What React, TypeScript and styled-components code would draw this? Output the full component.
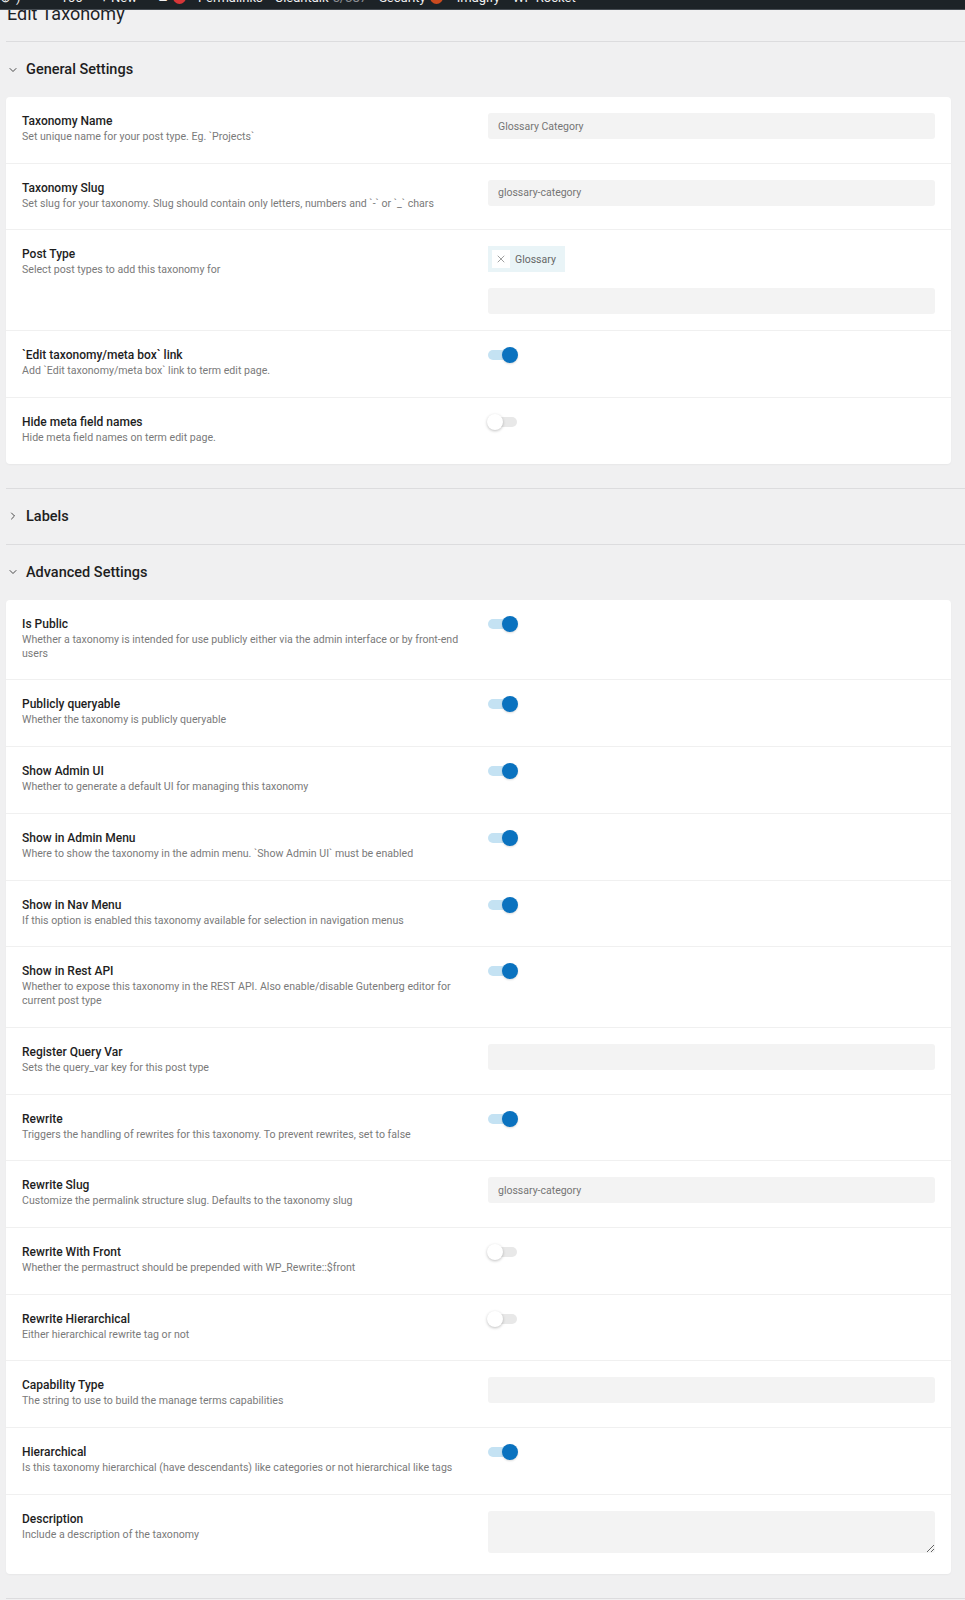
import React from 'react';
import styled, { createGlobalStyle } from 'styled-components';
import { ChevronDown, ChevronRight, X } from 'lucide-react';

const GlobalStyle = createGlobalStyle`
  body {
    margin: 0;
    background: #f0f0f1;
    font-family: Roboto, "Liberation Sans", sans-serif;
    color: #1e1e1e;
  }
  * { box-sizing: border-box; }
`;

/* top admin bar, fixed over the page like in wp-admin */
const AdminBar = styled.div`
  position: fixed;
  top: 0;
  left: 0;
  right: 0;
  height: 10px;
  background: #1d2327;
  border-bottom: 1px solid #474d53;
  overflow: hidden;
  z-index: 10;
`;

const BarItems = styled.div`
  display: flex;
  align-items: center;
  height: 13px;
  margin-top: -9px;
  font-size: 13px;
  line-height: 13px;
  color: #f0f0f1;
  white-space: nowrap;
`;

const BarItem = styled.span<{ $left: number }>`
  margin-left: ${p => p.$left}px;
  display: inline-flex;
  align-items: center;
  gap: 4px;
`;

const BarMuted = styled.span`
  color: #8c8f94;
`;

const BarBadge = styled.span<{ $color: string }>`
  display: inline-block;
  width: 13px;
  height: 13px;
  border-radius: 50%;
  background: ${p => p.$color};
`;

const Page = styled.div`
  padding: 0 0 0 6px;
`;

const Title = styled.h1`
  margin: 0 0 13px 1px;
  font-size: 18px;
  line-height: 28px;
  font-weight: 400;
  color: #1d2327;
`;

const Section = styled.section`
  border-top: 1px solid #dcdcde;
`;

const SectionHeader = styled.div`
  height: 55px;
  display: flex;
  align-items: center;
  gap: 7px;
  padding-left: 1px;
  font-size: 14.5px;
  font-weight: 500;
  color: #1e1e1e;
`;

const Card = styled.div`
  background: #fff;
  border-radius: 4px;
  margin: 0 14px 24px 0;
  box-shadow: 0 1px 2px rgba(0, 0, 0, 0.04);
`;

const Row = styled.div`
  display: grid;
  grid-template-columns: 1fr 1fr;
  column-gap: 19px;
  padding: 16px;
  & + & {
    border-top: 1px solid #f0f0f0;
  }
`;

const Info = styled.div`
  padding-bottom: 2.7px;
`;

const Label = styled.div`
  font-size: 12px;
  line-height: 17px;
  font-weight: 500;
  color: #1e1e1e;
`;

const Help = styled.div`
  font-size: 10.6px;
  line-height: 14px;
  color: #7a7a7a;
`;

const Control = styled.div`
  display: flex;
  flex-direction: column;
  align-items: flex-start;
  gap: 16px;
`;

const TextInput = styled.input`
  width: 100%;
  height: 26px;
  border: none;
  border-radius: 3px;
  background: #f3f3f3;
  padding: 0 10px;
  font-family: inherit;
  font-size: 10.5px;
  color: #757575;
  outline: none;
`;

const TextArea = styled.textarea`
  display: block;
  width: 100%;
  height: 42px;
  margin-bottom: 5px;
  border: none;
  border-radius: 3px;
  background: #f3f3f3;
  padding: 6px 10px;
  font-family: inherit;
  font-size: 10.5px;
  color: #757575;
  resize: vertical;
  outline: none;
`;

const Tag = styled.span`
  display: inline-flex;
  align-items: center;
  gap: 5px;
  height: 26px;
  padding: 0 9px 0 4px;
  background: #e9f4f7;
  font-size: 10.5px;
  color: #666;
`;

const TagRemove = styled.span`
  width: 18px;
  height: 18px;
  display: flex;
  align-items: center;
  justify-content: center;
  background: #fff;
  color: #777;
`;

const Track = styled.span<{ $on: boolean }>`
  position: relative;
  display: block;
  width: 29px;
  height: 10px;
  margin-top: 3px;
  border-radius: 5px;
  background: ${p => (p.$on ? '#c4e2f3' : '#e8e8e8')};
`;

const Knob = styled.span<{ $on: boolean }>`
  position: absolute;
  top: -3px;
  left: ${p => (p.$on ? '14px' : '-1px')};
  width: 16px;
  height: 16px;
  border-radius: 50%;
  background: ${p => (p.$on ? '#0a72bf' : '#fff')};
  box-shadow: ${p => (p.$on ? '0 1px 2px rgba(0,0,0,0.15)' : '0 1px 3px rgba(0,0,0,0.25)')};
`;

type Field =
  | { kind: 'input'; value?: string }
  | { kind: 'toggle'; on: boolean }
  | { kind: 'tags'; tags: string[] }
  | { kind: 'textarea' };

type Setting = { label: string; help: string; field: Field };

const general: Setting[] = [
  { label: 'Taxonomy Name', help: 'Set unique name for your post type. Eg. `Projects`', field: { kind: 'input', value: 'Glossary Category' } },
  { label: 'Taxonomy Slug', help: "Set slug for your taxonomy. Slug should contain only letters, numbers and `-` or `_` chars", field: { kind: 'input', value: 'glossary-category' } },
  { label: 'Post Type', help: 'Select post types to add this taxonomy for', field: { kind: 'tags', tags: ['Glossary'] } },
  { label: '`Edit taxonomy/meta box` link', help: 'Add `Edit taxonomy/meta box` link to term edit page.', field: { kind: 'toggle', on: true } },
  { label: 'Hide meta field names', help: 'Hide meta field names on term edit page.', field: { kind: 'toggle', on: false } },
];

const advanced: Setting[] = [
  { label: 'Is Public', help: 'Whether a taxonomy is intended for use publicly either via the admin interface or by front-end users', field: { kind: 'toggle', on: true } },
  { label: 'Publicly queryable', help: 'Whether the taxonomy is publicly queryable', field: { kind: 'toggle', on: true } },
  { label: 'Show Admin UI', help: 'Whether to generate a default UI for managing this taxonomy', field: { kind: 'toggle', on: true } },
  { label: 'Show in Admin Menu', help: 'Where to show the taxonomy in the admin menu. `Show Admin UI` must be enabled', field: { kind: 'toggle', on: true } },
  { label: 'Show in Nav Menu', help: 'If this option is enabled this taxonomy available for selection in navigation menus', field: { kind: 'toggle', on: true } },
  { label: 'Show in Rest API', help: 'Whether to expose this taxonomy in the REST API. Also enable/disable Gutenberg editor for current post type', field: { kind: 'toggle', on: true } },
  { label: 'Register Query Var', help: 'Sets the query_var key for this post type', field: { kind: 'input' } },
  { label: 'Rewrite', help: 'Triggers the handling of rewrites for this taxonomy. To prevent rewrites, set to false', field: { kind: 'toggle', on: true } },
  { label: 'Rewrite Slug', help: 'Customize the permalink structure slug. Defaults to the taxonomy slug', field: { kind: 'input', value: 'glossary-category' } },
  { label: 'Rewrite With Front', help: 'Whether the permastruct should be prepended with WP_Rewrite::$front', field: { kind: 'toggle', on: false } },
  { label: 'Rewrite Hierarchical', help: 'Either hierarchical rewrite tag or not', field: { kind: 'toggle', on: false } },
  { label: 'Capability Type', help: 'The string to use to build the manage terms capabilities', field: { kind: 'input' } },
  { label: 'Hierarchical', help: 'Is this taxonomy hierarchical (have descendants) like categories or not hierarchical like tags', field: { kind: 'toggle', on: true } },
  { label: 'Description', help: 'Include a description of the taxonomy', field: { kind: 'textarea' } },
];

const Toggle: React.FC<{ on: boolean }> = ({ on }) => (
  <Track $on={on}>
    <Knob $on={on} />
  </Track>
);

const FieldControl: React.FC<{ field: Field }> = ({ field }) => {
  switch (field.kind) {
    case 'input':
      return <TextInput defaultValue={field.value ?? ''} />;
    case 'textarea':
      return <TextArea />;
    case 'toggle':
      return <Toggle on={field.on} />;
    case 'tags':
      return (
        <>
          {field.tags.map(t => (
            <Tag key={t}>
              <TagRemove>
                <X size={12} strokeWidth={1.4} />
              </TagRemove>
              {t}
            </Tag>
          ))}
          <TextInput />
        </>
      );
  }
};

const SettingsCard: React.FC<{ items: Setting[] }> = ({ items }) => (
  <Card>
    {items.map(s => (
      <Row key={s.label}>
        <Info>
          <Label>{s.label}</Label>
          <Help>{s.help}</Help>
        </Info>
        <Control>
          <FieldControl field={s.field} />
        </Control>
      </Row>
    ))}
  </Card>
);

const Panel: React.FC<{ title: string; open: boolean; items?: Setting[] }> = ({ title, open, items }) => (
  <Section>
    <SectionHeader>
      {open ? <ChevronDown size={12} strokeWidth={1.6} /> : <ChevronRight size={12} strokeWidth={1.6} />}
      {title}
    </SectionHeader>
    {open && items && <SettingsCard items={items} />}
  </Section>
);

const App: React.FC = () => (
  <>
    <GlobalStyle />
    <AdminBar>
      <BarItems>
        <BarItem $left={0}>⊕</BarItem>
        <BarItem $left={5}>)</BarItem>
        <BarItem $left={40}>166</BarItem>
        <BarItem $left={18}>+ New</BarItem>
        <BarItem $left={22}>
          ▰<BarBadge $color="#d63638" />
        </BarItem>
        <BarItem $left={12}>Permalinks</BarItem>
        <BarItem $left={12}>
          Cleantalk <BarMuted>5/387</BarMuted>
        </BarItem>
        <BarItem $left={12}>
          Security <BarBadge $color="#ca4a1f" />
        </BarItem>
        <BarItem $left={14}>Imagify</BarItem>
        <BarItem $left={13}>WP Rocket</BarItem>
      </BarItems>
    </AdminBar>
    <Page>
      <Title>Edit Taxonomy</Title>
      <Panel title="General Settings" open items={general} />
      <Panel title="Labels" open={false} />
      <Panel title="Advanced Settings" open items={advanced} />
      <Section />
    </Page>
  </>
);

export default App;
